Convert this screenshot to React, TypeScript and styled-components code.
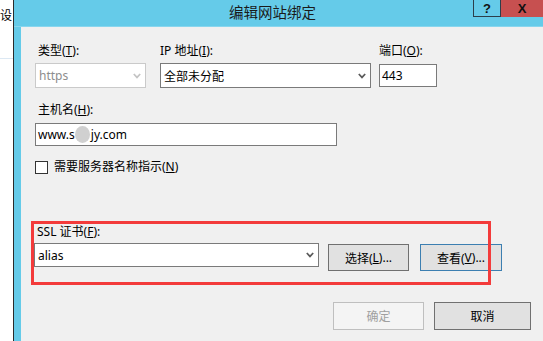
import React from "react";
import styled, { createGlobalStyle } from "styled-components";

const GlobalStyle = createGlobalStyle`
  html, body { margin: 0; padding: 0; background: #fff; }
  body {
    font-family: "Noto Sans", "Noto Sans CJK SC", sans-serif;
    font-size: 12px;
    color: #000;
  }
`;

const Screen = styled.div`
  display: flex;
  width: 543px;
  height: 341px;
  overflow: hidden;
`;

// the window behind the dialog, only a sliver shows
const Behind = styled.div`
  flex: none;
  width: 13px;
  overflow: hidden;
  background: #fff;
  display: flex;
  flex-direction: column;
`;

const BehindText = styled.div`
  margin: 8px 0 0 0;
  line-height: 16px;
  white-space: nowrap;
`;

const BehindRule = styled.div`
  margin-top: 34px;
  height: 1px;
  background: #dce8f3;
`;

const Window = styled.div`
  flex: 1;
  display: flex;
  flex-direction: column;
  background: #65cbe9;
  border-left: 1px solid #2b2b2b;
`;

const TitleBar = styled.div`
  flex: none;
  height: 26px;
  display: grid;
  grid-template-columns: 1fr auto 1fr;
  border-bottom: 1px solid #88d6ee;
`;

const Title = styled.div`
  grid-column: 2;
  margin-right: 12px;
  font-family: "Noto Sans CJK SC", sans-serif;
  font-size: 14.5px;
  line-height: 24px;
  color: #1a1a1a;
`;

const Controls = styled.div`
  grid-column: 3;
  justify-self: end;
  align-self: start;
  display: flex;
`;

const CaptionButton = styled.div<{ $close?: boolean }>`
  box-sizing: border-box;
  width: ${(p) => (p.$close ? 42 : 28)}px;
  height: 17px;
  display: flex;
  align-items: center;
  justify-content: center;
  background: ${(p) => (p.$close ? "#c75050" : "transparent")};
  border: ${(p) => (p.$close ? "none" : "1px solid #2c3e4a")};
  border-top: none;
  font-family: "Liberation Sans", sans-serif;
  font-weight: bold;
  font-size: 13px;
  color: #111;
`;

const Body = styled.div`
  flex: 1;
  display: flex;
  padding-left: 7px;
`;

const Panel = styled.div`
  flex: 1;
  background: #f0f0f0;
  padding: 16px 12px 0 14px;
  display: flex;
  flex-direction: column;
`;

const Label = styled.div<{ $indent?: number }>`
  padding-left: ${(p) => p.$indent ?? 3}px;
  line-height: 16px;
  height: 16px;
  white-space: nowrap;
`;

const FieldRow = styled.div`
  display: flex;
  align-items: flex-start;
`;

const Field = styled.div<{ $w: number; $mr?: number }>`
  display: flex;
  flex-direction: column;
  width: ${(p) => p.$w}px;
  margin-right: ${(p) => p.$mr ?? 0}px;
  & > ${Label} {
    margin-bottom: 4px;
  }
`;

const Select = styled.div<{ $disabled?: boolean; $h?: number }>`
  box-sizing: border-box;
  height: ${(p) => p.$h ?? 25}px;
  width: 100%;
  display: flex;
  align-items: center;
  justify-content: space-between;
  padding: 0 4px 0 3px;
  background: #fff;
  border: 1px solid ${(p) => (p.$disabled ? "#cacaca" : "#7a7a7a")};
  color: ${(p) => (p.$disabled ? "#8d8d8d" : "#000")};
  white-space: nowrap;
`;

const TextBox = styled.div<{ $w: number }>`
  box-sizing: border-box;
  width: ${(p) => p.$w}px;
  height: 23px;
  display: flex;
  align-items: center;
  padding-left: 2px;
  background: #fff;
  border: 1px solid #7a7a7a;
  white-space: nowrap;
`;

const PortBox = styled(TextBox)`
  margin-top: 1px;
`;

const HostBlock = styled.div`
  margin-top: 14px;
  display: flex;
  flex-direction: column;
  & > ${Label} {
    margin-bottom: 5px;
  }
`;

const Smudge = styled.span`
  display: inline-block;
  width: 15px;
  height: 17px;
  margin: 0 1px 0 0;
  border-radius: 50%;
  background: #d0d0d0;
  filter: blur(0.6px);
  vertical-align: middle;
`;

const CheckRow = styled.div`
  margin-top: 13px;
  display: flex;
  align-items: center;
  gap: 6px;
  line-height: 16px;
`;

const CheckBox = styled.div`
  box-sizing: border-box;
  width: 13px;
  height: 13px;
  background: #fff;
  border: 1px solid #333;
`;

const SslSection = styled.div`
  position: relative;
  margin: 49px 0 0 -1px;
  & > ${Label} {
    margin-bottom: 3px;
  }
`;

// red annotation drawn over the screenshot
const Highlight = styled.div`
  position: absolute;
  left: -3px;
  top: -3px;
  width: 460px;
  height: 64px;
  box-sizing: border-box;
  border: 3px solid #f33b3b;
  pointer-events: none;
`;

const SslRow = styled.div`
  display: flex;
  align-items: flex-start;
`;

const SslSelect = styled(Select)`
  width: 285px;
`;

const Button = styled.div<{ $w: number; $h?: number; $focus?: boolean; $disabled?: boolean; $ml?: number }>`
  box-sizing: border-box;
  width: ${(p) => p.$w}px;
  height: ${(p) => p.$h ?? 27}px;
  margin-left: ${(p) => p.$ml ?? 0}px;
  display: flex;
  align-items: center;
  justify-content: center;
  white-space: nowrap;
  background: ${(p) => (p.$disabled ? "#f4f4f4" : "#e1e1e1")};
  border: 1px solid ${(p) => (p.$focus ? "#3c7fb1" : p.$disabled ? "#bfbfbf" : "#707070")};
  color: ${(p) => (p.$disabled ? "#a0a0a0" : "#000")};
`;

const SslButton = styled(Button)`
  margin-top: 1px;
`;

const Footer = styled.div`
  margin-top: 31px;
  display: flex;
  justify-content: flex-end;
  gap: 10px;
`;

const Chevron = ({ light }: { light?: boolean }) => (
  <svg width="8" height="6" viewBox="0 0 8 6">
    <polyline
      points="0.8,1 4,4.4 7.2,1"
      fill="none"
      stroke={light ? "#c4c4c4" : "#5a5a5a"}
      strokeWidth="1.7"
    />
  </svg>
);

export default function App() {
  return (
    <>
      <GlobalStyle />
      <Screen>
        <Behind>
          <BehindText>设</BehindText>
          <BehindRule />
        </Behind>
        <Window>
          <TitleBar>
            <Title>编辑网站绑定</Title>
            <Controls>
              <CaptionButton>?</CaptionButton>
              <CaptionButton $close>X</CaptionButton>
            </Controls>
          </TitleBar>
          <Body>
            <Panel>
              <FieldRow>
                <Field $w={111} $mr={14}>
                  <Label>
                    类型(<u>T</u>):
                  </Label>
                  <Select $disabled>
                    <span>https</span>
                    <Chevron light />
                  </Select>
                </Field>
                <Field $w={211} $mr={8}>
                  <Label $indent={0}>
                    IP 地址(<u>I</u>):
                  </Label>
                  <Select>
                    <span>全部未分配</span>
                    <Chevron />
                  </Select>
                </Field>
                <Field $w={58}>
                  <Label $indent={0}>
                    端口(<u>O</u>):
                  </Label>
                  <PortBox $w={58}>443</PortBox>
                </Field>
              </FieldRow>

              <HostBlock>
                <Label>
                  主机名(<u>H</u>):
                </Label>
                <TextBox $w={302}>
                  www.s<Smudge />jy.com
                </TextBox>
              </HostBlock>

              <CheckRow>
                <CheckBox />
                <span>
                  需要服务器名称指示(<u>N</u>)
                </span>
              </CheckRow>

              <SslSection>
                <Label>
                  SSL 证书(<u>F</u>):
                </Label>
                <SslRow>
                  <SslSelect $h={24}>
                    <span>alias</span>
                    <Chevron />
                  </SslSelect>
                  <SslButton $w={81} $ml={9}>
                    选择(<u>L</u>)...
                  </SslButton>
                  <SslButton $w={82} $ml={11} $focus>
                    查看(<u>V</u>)...
                  </SslButton>
                </SslRow>
                <Highlight />
              </SslSection>

              <Footer>
                <Button $w={91} $h={28} $disabled>
                  确定
                </Button>
                <Button $w={97} $h={28}>
                  取消
                </Button>
              </Footer>
            </Panel>
          </Body>
        </Window>
      </Screen>
    </>
  );
}
